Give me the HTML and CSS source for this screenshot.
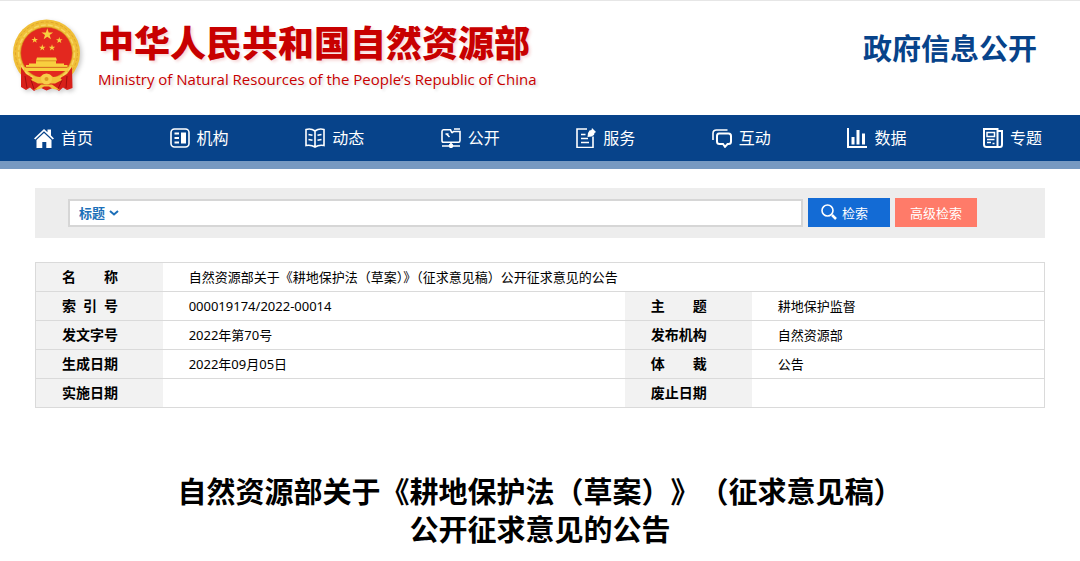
FILE: index.html
```html
<!DOCTYPE html>
<html lang="zh-CN">
<head>
    <meta charset="UTF-8">
    <meta name="viewport" content="width=device-width, initial-scale=1.0">
    <title>中华人民共和国自然资源部 - 政府信息公开</title>
    <link rel="stylesheet" href="styles.css">
</head>
<body>
<header class="header">
    <a class="logo" href="#">
        <svg class="emblem" viewBox="0 0 70 74" aria-hidden="true">
            <defs>
                <path id="star" d="M0-5.5 1.3-1.7 5.3-1.7 2.1.7 3.3 4.5 0 2.2-3.3 4.5-2.1.7-5.3-1.7-1.3-1.7Z"/>
            </defs>
            <circle cx="34.5" cy="34" r="33.5" fill="#f0bf38"/>
            <circle cx="34.5" cy="34" r="31" fill="none" stroke="#e0a52c" stroke-width="1" stroke-dasharray="3 2"/>
            <circle cx="34.5" cy="34" r="28" fill="none" stroke="#f7d660" stroke-width="1.5" stroke-dasharray="5 2"/>
            <circle cx="34.5" cy="34" r="25.8" fill="#e3281f" stroke="#c98217" stroke-width=".6"/>
            <g fill="#f8cf3f">
                <use href="#star" transform="translate(35.3 15.3) scale(1.1)"/>
                <use href="#star" transform="translate(22.7 21) scale(.62)"/>
                <use href="#star" transform="translate(47.3 21.3) scale(.62)"/>
                <use href="#star" transform="translate(30.3 28.7) scale(.62)"/>
                <use href="#star" transform="translate(40 28.7) scale(.62)"/>
                <path d="M25 38.5h19l1 3H24zM24 41.5h20V45H24zM14 46h41.5v2H14zM17 44.5h35V46H17zM12 48.5h45L55.5 52H13.5z"/>
            </g>
            <path d="M14 48.3h41M24 41.8h20" stroke="#c46a15" stroke-width=".6"/>
            <path d="M9 48 14 55 24 61 34.5 63 45 61 55 55 60 48 60.500 69 55 71 51 68.500 47 72 42 68.500 34.500 71.500 28 68.500 22 72 18 68.500 14 71 9 68Z" fill="#d8201a"/>
            <path d="M13 57 15 69M19 61 22 70M55 57 54 69M50 61 46 70" stroke="#a30f0d" stroke-width="1"/>
            <path d="M22 57.500 28 58 31 55.500H38L41 58 47 57.500 50 61 43 64.500 26 64.500 19 61Z" fill="#f2c23a"/>
            <circle cx="34.5" cy="60" r="5.5" fill="#f7cf4a"/>
            <circle cx="34.5" cy="60" r="2" fill="#dd9a25"/>
            <path d="M22 71 29 65.500H40L48 71 41 70 37 67.500H32L28 70Z" fill="#f2c23a"/>
        </svg>
        <span class="logo-text">
            <strong class="logo-cn">中华人民共和国自然资源部</strong>
            <span class="logo-en">Ministry of Natural Resources of the People‘s Republic of China</span>
        </span>
    </a>
    <h2 class="section-name">政府信息公开</h2>
</header>

<nav class="nav">
    <a href="#">
        <svg class="solid" viewBox="0 0 20 20"><path d="M10 1 13.5 4.3V1.5H17V7.5L20 10.5 18.700 11.500 10 3.300 1.300 11.500 0 10.500ZM10 5 17.500 12V20H12.300V14H8.300V20H2.500V12Z"/></svg>
        首页
    </a>
    <a href="#">
        <svg viewBox="0 0 20 20"><rect x="1" y="1" width="18" height="18" rx="3.5"/><path stroke-width="2" d="M4.500 5.500h4.500M4.500 10h4.500M4.500 14.500h4.500"/><path fill="#fff" stroke="none" d="M11 4.500h5v11h-5z"/></svg>
        机构
    </a>
    <a href="#">
        <svg viewBox="0 0 20 20"><path d="M10 3Q6 0 1 1.500V17.500Q6 16.500 10 19Q14 16.500 19 17.500V1.500Q14 0 10 3ZM10 3V19M3.500 6.500l4 .8M3.500 11.500l4 .8M16.500 6.500l-4 .8M16.500 11.500l-4 .8"/></svg>
        动态
    </a>
    <a href="#">
        <svg viewBox="0 0 20 20"><path d="M11 5 9.500 1.800H2.500Q1 1.800 1 3.500V12.500Q1 14.300 2.500 14.300H17.500Q19 14.300 19 12.500V3.500H12.500L11 5M13 1h6M1 18H8M12 18H19M10 14.500V16M4.500 6h3M5.500 6l3 3"/><circle cx="10" cy="17.8" r="1.5" fill="#fff"/></svg>
        公开
    </a>
    <a href="#">
        <svg viewBox="0 0 20 20"><path d="M11 1H1V19.500H17V8.500M5 6.500h4.500M5 10.500h7M5 14.500h8"/><path fill="#fff" stroke="none" d="M16 0 20 4 18.500 5 18 7 15.500 8.500 11.500 9 12 5 13.500 2.500 15.500 2Z"/></svg>
        服务
    </a>
    <a href="#">
        <svg viewBox="0 0 20 20"><path d="M1 12V5.500Q1 2 4.500 2H15.500"/><path stroke-width="2" d="M7 5.500H16.500Q19 5.500 19 8V13.500Q19 16 16.500 16H15.500L13 18.800 11 16H7.500Q5 16 5 13.500V8Q5 5.500 7 5.500Z"/></svg>
        互动
    </a>
    <a href="#">
        <svg viewBox="0 0 20 20"><path stroke-width="2" d="M1 0V19H20"/><path stroke-width="3" d="M6 9V16.500M11 2V16.500M16.500 5.500V16.500"/></svg>
        数据
    </a>
    <a href="#">
        <svg viewBox="0 0 20 20"><path stroke-width="2" d="M14.500 18.500V1H1V16.500Q1 19 3.500 19H17Q19 19 19 16.500V3H15"/><path stroke-width="1.5" d="M4 4.500h7.500v4H4zM4 11.500h7.500M4 14.500h4M9.500 15.500h2"/></svg>
        专题
    </a>
</nav>

<main class="main">
    <form class="search">
        <div class="search-box">
            <select class="search-type" aria-label="检索范围">
                <option>标题</option>
                <option>正文</option>
            </select>
            <svg class="arrow" viewBox="0 0 10 8"><path d="M1 2 5 5.500 9 2"/></svg>
            <input class="search-input" type="text" aria-label="检索内容">
        </div>
        <button class="btn btn-search" type="submit">
            <svg viewBox="0 0 16 16"><circle cx="6.5" cy="6.5" r="5.5"/><path stroke-width="2.5" d="M11 11 15 15"/></svg>
            检索
        </button>
        <button class="btn btn-advanced" type="button">高级检索</button>
    </form>

    <table class="info">
        <colgroup>
            <col class="col-label">
            <col class="col-wide">
            <col class="col-label">
            <col>
        </colgroup>
        <tr>
            <th scope="row">名　　称</th>
            <td colspan="3">自然资源部关于《耕地保护法（草案）》（征求意见稿）公开征求意见的公告</td>
        </tr>
        <tr>
            <th scope="row">索&ensp;引&ensp;号</th>
            <td>000019174/2022-00014</td>
            <th scope="row">主　　题</th>
            <td>耕地保护监督</td>
        </tr>
        <tr>
            <th scope="row">发文字号</th>
            <td>2022年第70号</td>
            <th scope="row">发布机构</th>
            <td>自然资源部</td>
        </tr>
        <tr>
            <th scope="row">生成日期</th>
            <td>2022年09月05日</td>
            <th scope="row">体　　裁</th>
            <td>公告</td>
        </tr>
        <tr>
            <th scope="row">实施日期</th>
            <td></td>
            <th scope="row">废止日期</th>
            <td></td>
        </tr>
    </table>

    <h1 class="title">自然资源部关于《耕地保护法（草案）》（征求意见稿）<br>公开征求意见的公告</h1>
</main>
</body>
</html>
```
FILE: styles.css
```css
* {
    box-sizing: border-box;
}

body {
    margin: 0;
    border-top: 1px solid #e6e6e6;
    background: #fff;
    color: #000;
    font-family: "Noto Sans", "Noto Sans CJK SC", sans-serif;
    font-size: 13px;
}

a {
    text-decoration: none;
}

/* header */
.header {
    display: flex;
    justify-content: space-between;
    align-items: flex-start;
    height: 114px;
    padding: 18px 43px 0 12px;
}

.logo {
    display: flex;
    gap: 16px;
    color: #c80000;
}

.emblem {
    width: 70px;
    height: 74px;
    filter: drop-shadow(2px 2px 2px rgba(0, 0, 0, 0.2));
}

.logo-text {
    display: flex;
    flex-direction: column;
    padding-top: 2px;
}

.logo-cn {
    font-size: 36px;
    font-weight: 900;
    line-height: 46px;
    text-shadow: 2px 2px 3px rgba(200, 0, 0, 0.15);
}

.logo-en {
    font-family: "Open Sans", "Noto Sans", sans-serif;
    font-size: 15px;
    line-height: 24px;
    text-shadow: 2px 2px 3px rgba(0, 0, 0, 0.15);
}

.section-name {
    margin: 10px 0 0;
    color: #07438a;
    font-size: 29px;
    line-height: 40px;
}

/* nav */
.nav {
    display: flex;
    justify-content: space-between;
    padding: 0 38px 0 34px;
    background: #07438a;
    border-bottom: 8px solid #7799c1;
}

.nav a {
    display: flex;
    align-items: center;
    gap: 7px;
    height: 46px;
    color: #fff;
    font-size: 16px;
    line-height: 24px;
}

.nav svg {
    width: 20px;
    height: 20px;
    fill: none;
    stroke: #fff;
    stroke-width: 1.6;
}

.nav .solid {
    fill: #fff;
    stroke: none;
}

.main {
    padding: 19px 35px;
}

/* search */
.search {
    display: flex;
    align-items: center;
    gap: 5px;
    height: 50px;
    padding: 0 68px 1px 33px;
    background: #ededed;
}

.search-box {
    display: flex;
    flex: 1;
    align-items: center;
    height: 28px;
    padding-left: 9px;
    background: #fff;
    border: 2px solid #d6d6d6;
}

.search-type {
    appearance: none;
    padding: 0;
    border: none;
    background: none;
    color: #1c6fb8;
    font-family: inherit;
    font-size: 13px;
    font-weight: bold;
}

.arrow {
    width: 10px;
    height: 8px;
    margin-left: 3px;
    fill: none;
    stroke: #1c6fb8;
    stroke-width: 2;
}

.search-input {
    flex: 1;
    min-width: 0;
    height: 24px;
    border: none;
    background: none;
    font-family: inherit;
    font-size: 13px;
}

.btn {
    display: flex;
    align-items: center;
    justify-content: center;
    gap: 5px;
    width: 82px;
    height: 29px;
    padding: 0 0 1px;
    border: none;
    color: #fff;
    font-family: inherit;
    font-size: 13px;
    cursor: pointer;
}

.btn-search {
    padding-right: 9px;
    background: #136bd5;
}

.btn-search svg {
    width: 16px;
    height: 16px;
    fill: none;
    stroke: #fff;
    stroke-width: 1.6;
}

.btn-advanced {
    background: #ff7b69;
}

/* document info */
.info {
    width: 100%;
    margin-top: 24px;
    border: 1px solid #dadada;
    border-collapse: collapse;
    table-layout: fixed;
}

.info tr {
    height: 29px;
    border-bottom: 1px solid #dadada;
}

.info th,
.info td {
    padding: 0 0 1px 26px;
    line-height: 20px;
    text-align: left;
}

.info th {
    background: #f2f2f2;
    font-size: 14px;
}

.col-label {
    width: 12.6%;
}

.col-wide {
    width: 45.8%;
}

.title {
    margin: 65px 0 0;
    font-size: 29px;
    line-height: 38px;
    text-align: center;
    text-spacing-trim: space-all;
}
```
